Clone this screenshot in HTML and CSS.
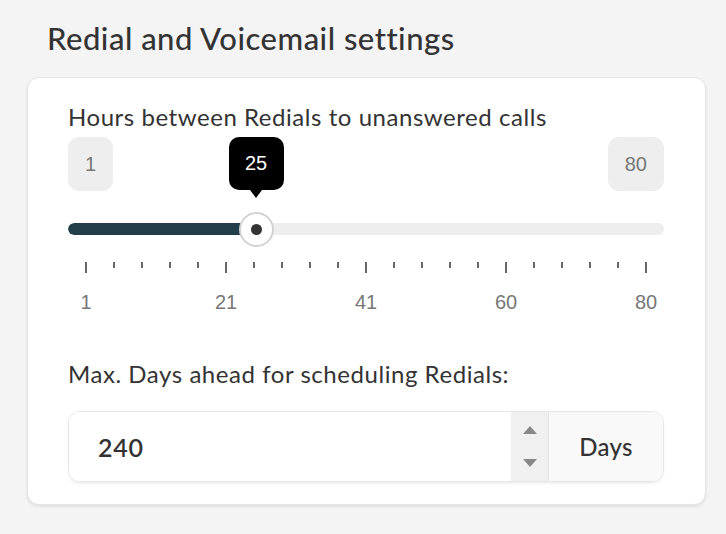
FILE: index.html
```html
<!DOCTYPE html>
<html>
<head>
<meta charset="utf-8">
<link rel="stylesheet" href="styles.css">
</head>
<body>
<div class="page">
  <h1 class="title">Redial and Voicemail settings</h1>
  <div class="card">
    <div class="label">Hours between Redials to unanswered calls</div>
    <div class="slider">
      <div class="ends">
        <span class="badge">1</span>
        <span class="badge">80</span>
      </div>
      <div class="track">
        <div class="fill" style="width: 188px"></div>
      </div>
      <div class="thumb" style="left: 188px"><span class="dot"></span></div>
      <div class="tooltip" style="left: 188px">25</div>
    </div>
    <div class="ticks">
      <span class="tick major"></span><span class="tick"></span><span class="tick"></span><span class="tick"></span><span class="tick"></span>
      <span class="tick major"></span><span class="tick"></span><span class="tick"></span><span class="tick"></span><span class="tick"></span>
      <span class="tick major"></span><span class="tick"></span><span class="tick"></span><span class="tick"></span><span class="tick"></span>
      <span class="tick major"></span><span class="tick"></span><span class="tick"></span><span class="tick"></span><span class="tick"></span>
      <span class="tick major"></span>
    </div>
    <div class="tick-labels">
      <span class="tl"><span>1</span></span>
      <span class="tl"><span>21</span></span>
      <span class="tl"><span>41</span></span>
      <span class="tl"><span>60</span></span>
      <span class="tl"><span>80</span></span>
    </div>
    <div class="label label-2">Max. Days ahead for scheduling Redials:</div>
    <div class="input-group">
      <div class="input">240</div>
      <div class="spinner">
        <span class="arrow up"></span>
        <span class="arrow down"></span>
      </div>
      <div class="addon">Days</div>
    </div>
  </div>
</div>
</body>
</html>
```
FILE: styles.css
```css
* { box-sizing: border-box; }
html, body { margin: 0; padding: 0; }
body {
  background: #f4f4f4;
  font-family: Lato, "Open Sans", sans-serif;
  color: #333;
  width: 726px;
  height: 534px;
  overflow: hidden;
}
.page {
  padding: 19px 0 0 27px;
}
.title {
  margin: 0 0 0 20px;
  font-size: 31px;
  line-height: 39px;
  font-weight: 500;
  color: #333;
  letter-spacing: 0.5px;
}
.card {
  margin-top: 19px;
  width: 679px;
  background: #fff;
  border: 1px solid #e4e4e4;
  border-radius: 12px;
  box-shadow: 0 2px 3px rgba(0,0,0,0.08);
  padding: 25px 41px 22px 40px;
}
.label {
  font-size: 24px;
  line-height: 28px;
  color: #333;
  letter-spacing: 0.55px;
}
.slider {
  position: relative;
  margin-top: 6px;
}
.ends {
  display: flex;
  justify-content: space-between;
  height: 54px;
}
.badge {
  display: flex;
  align-items: center;
  justify-content: center;
  min-width: 44px;
  padding: 0 17px;
  height: 54px;
  background: #eeeeee;
  border-radius: 11px;
  font-family: "Liberation Sans", Arial, sans-serif;
  font-size: 20px;
  color: #777;
}
.track {
  margin-top: 32px;
  height: 12px;
  border-radius: 6px;
  background: #eeeeee;
  position: relative;
  overflow: hidden;
}
.fill {
  height: 100%;
  background: #213e49;
  border-radius: 6px 0 0 6px;
}
.thumb {
  position: absolute;
  top: 74.5px;
  width: 35px;
  height: 35px;
  margin-left: -17.5px;
  border-radius: 50%;
  background: #fff;
  border: 2px solid #d2d2d2;
  display: flex;
  align-items: center;
  justify-content: center;
}
.dot {
  width: 11px;
  height: 11px;
  border-radius: 50%;
  background: #333;
}
.tooltip {
  position: absolute;
  top: 0;
  width: 55px;
  height: 53px;
  margin-left: -27.5px;
  background: #000;
  color: #fff;
  border-radius: 10px;
  display: flex;
  align-items: center;
  justify-content: center;
  font-family: "Liberation Sans", Arial, sans-serif;
  font-size: 20px;
}
.tooltip::after {
  content: "";
  position: absolute;
  left: 50%;
  bottom: -8px;
  margin-left: -6px;
  border-left: 6px solid transparent;
  border-right: 6px solid transparent;
  border-top: 8px solid #000;
}
.ticks {
  display: flex;
  justify-content: space-between;
  align-items: flex-start;
  padding: 0 17px;
  margin-top: 27px;
  height: 11px;
}
.tick {
  width: 2px;
  height: 6px;
  background: #666;
}
.tick.major {
  height: 11px;
}
.tick-labels {
  display: flex;
  justify-content: space-between;
  padding: 0 18px;
  margin-top: 17px;
  height: 24px;
}
.tl {
  width: 0;
  display: flex;
  justify-content: center;
  font-family: "Liberation Sans", Arial, sans-serif;
  font-size: 20px;
  line-height: 24px;
  color: #777;
}
.tl span { white-space: nowrap; }
.label-2 {
  margin-top: 46px;
}
.input-group {
  margin-top: 23px;
  display: flex;
  height: 71px;
  border: 1px solid #e6e6e6;
  border-radius: 12px;
  overflow: hidden;
  box-shadow: 0 2px 2px rgba(0,0,0,0.06);
}
.input {
  flex: 1;
  display: flex;
  align-items: center;
  padding-left: 29px;
  font-size: 25px;
  font-weight: 600;
  letter-spacing: 0.8px;
  color: #333;
  background: #fff;
}
.spinner {
  width: 38px;
  background: #f0f0f0;
  border-right: 1px solid #e2e2e2;
  display: flex;
  flex-direction: column;
  align-items: center;
  justify-content: space-between;
  padding: 14px 0 14px;
}
.arrow {
  width: 0;
  height: 0;
  border-left: 7px solid transparent;
  border-right: 7px solid transparent;
}
.arrow.up { border-bottom: 8px solid #888; }
.arrow.down { border-top: 8px solid #888; }
.addon {
  width: 114px;
  background: #f9f9f9;
  display: flex;
  align-items: center;
  justify-content: center;
  font-size: 24px;
  font-weight: 500;
  letter-spacing: 0.3px;
  color: #333;
}
```
